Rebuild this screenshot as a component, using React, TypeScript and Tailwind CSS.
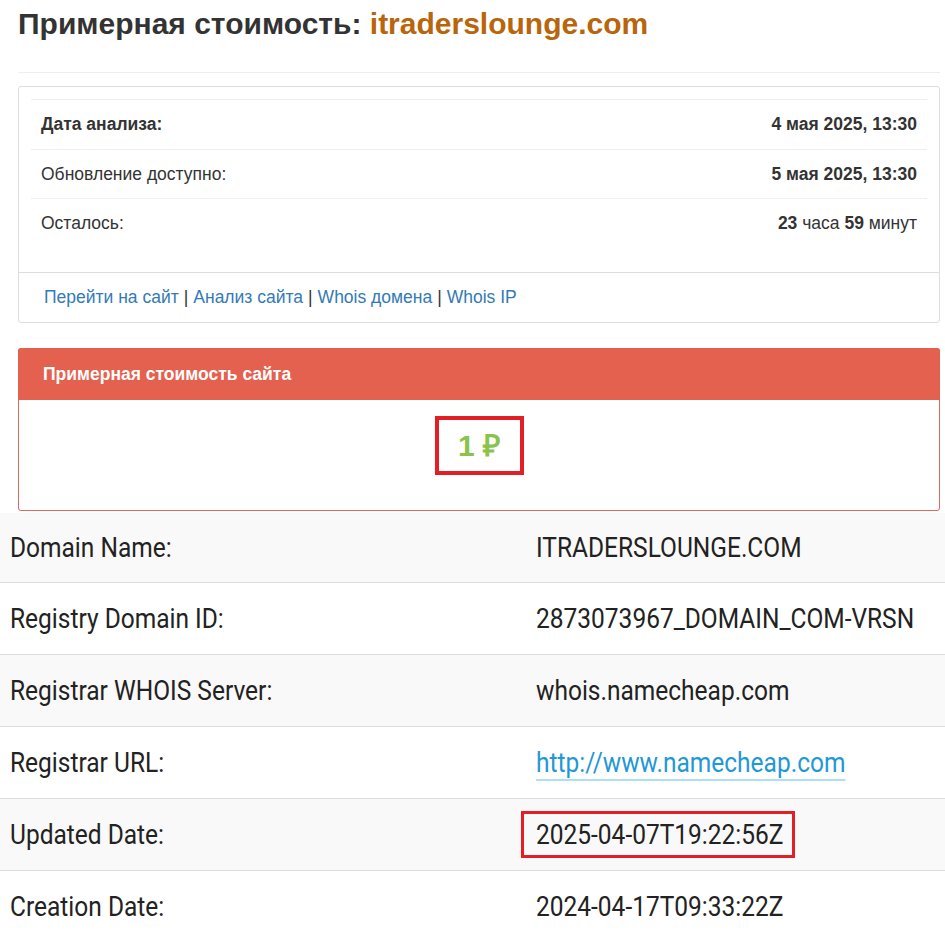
import React from 'react'

const whois = [
  { label: 'Domain Name:', value: 'ITRADERSLOUNGE.COM' },
  { label: 'Registry Domain ID:', value: '2873073967_DOMAIN_COM-VRSN' },
  { label: 'Registrar WHOIS Server:', value: 'whois.namecheap.com' },
  { label: 'Registrar URL:', value: 'http://www.namecheap.com', link: true },
  { label: 'Updated Date:', value: '2025-04-07T19:22:56Z', marked: true },
  { label: 'Creation Date:', value: '2024-04-17T09:33:22Z' },
]

// whois text in the shot is a bit narrow, so squeeze it horizontally
const narrow = 'inline-block origin-left scale-x-[0.875] whitespace-nowrap'

export default function App() {
  return (
    <div className="w-[945px] h-[934px] overflow-hidden bg-white text-[#333] font-['Liberation_Sans',Arial,sans-serif]">
      <div className="pl-[18px] pr-[5px]">
        <h1 className="pt-[6px] text-[30px] leading-[36px] font-bold text-[#333] whitespace-nowrap">
          Примерная стоимость: <span className="text-[#b8650c]">itraderslounge.com</span>
        </h1>

        <div className="mt-[30px] border-t border-[#eee]" />

        {/* analysis info panel */}
        <div className="mt-[13px] border border-[#ddd] rounded-[3px] bg-white">
          <div className="px-[12px] pt-[12px] pb-[25px] text-[17.5px]">
            <div className="border-t border-[#eee] h-[50px] flex items-center justify-between px-[10px]">
              <span className="font-bold">Дата анализа:</span>
              <span className="font-bold">4 мая 2025, 13:30</span>
            </div>
            <div className="border-t border-[#eee] h-[49px] flex items-center justify-between px-[10px]">
              <span>Обновление доступно:</span>
              <span className="font-bold">5 мая 2025, 13:30</span>
            </div>
            <div className="border-t border-[#eee] h-[49px] flex items-center justify-between px-[10px]">
              <span>Осталось:</span>
              <span>
                <b>23</b> часа <b>59</b> минут
              </span>
            </div>
          </div>
          <div className="border-t border-[#ddd] h-[50px] flex items-center pl-[25px] text-[17.5px]">
            <a className="text-[#337ab7]">Перейти на сайт</a>
            <span className="mx-[5px]">|</span>
            <a className="text-[#337ab7]">Анализ сайта</a>
            <span className="mx-[5px]">|</span>
            <a className="text-[#337ab7]">Whois домена</a>
            <span className="mx-[5px]">|</span>
            <a className="text-[#337ab7]">Whois IP</a>
          </div>
        </div>

        {/* estimated cost panel */}
        <div className="mt-[25px] border border-[#e0675a] rounded-[3px] bg-white">
          <div className="h-[52px] bg-[#e46150] flex items-center pl-[25px] -mx-px -mt-px rounded-t-[3px]">
            <span className="text-white font-bold text-[17.5px]">Примерная стоимость сайта</span>
          </div>
          <div className="h-[110px] flex justify-center pt-[16px]">
            <div className="w-[89px] h-[59px] border-[4px] border-[#e31e24] flex items-center justify-center">
              <span className="text-[#8bc34a] font-bold text-[30px] leading-none">1 ₽</span>
            </div>
          </div>
        </div>
      </div>

      {/* whois table */}
      <div className="mt-[2px] font-['Roboto',sans-serif] text-[28px] text-[#222]">
        {whois.map((row, i) => (
          <div
            key={row.label}
            className={`grid grid-cols-[526px_1fr] items-center border-b border-[#ddd] ${i === 0 ? 'h-[70px]' : 'h-[72px]'} ${i % 2 === 0 ? 'bg-[#f9f9f9]' : 'bg-white'}`}
          >
            <div className="pl-[10px]">
              <span className={narrow}>{row.label}</span>
            </div>
            <div className="pl-[10px]">
              {row.link ? (
                <a className={`${narrow} text-[#1f98d6] underline decoration-[#ade0f6] decoration-2 underline-offset-[7px]`}>
                  {row.value}
                </a>
              ) : row.marked ? (
                <div className="-ml-[15px] w-[274px] h-[47px] border-[3px] border-[#e31e24] pl-[12px] flex items-center">
                  <span className={narrow}>{row.value}</span>
                </div>
              ) : (
                <span className={narrow}>{row.value}</span>
              )}
            </div>
          </div>
        ))}
      </div>
    </div>
  )
}
